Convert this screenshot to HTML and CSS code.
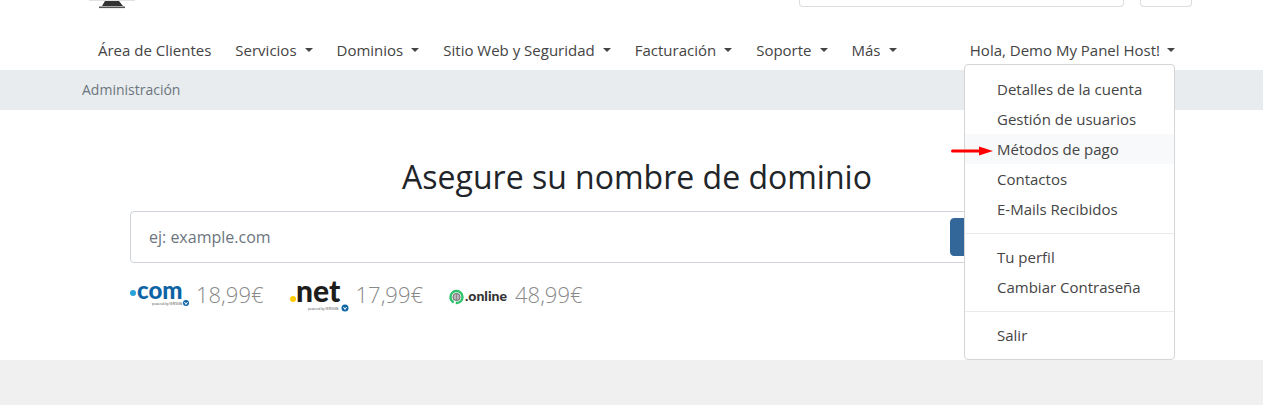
FILE: index.html
```html
<!DOCTYPE html>
<html lang="es">
<head>
    <meta charset="utf-8">
    <title>Área de Clientes</title>
    <link rel="stylesheet" href="styles.css">
</head>
<body>
    <header class="header">
        <div class="topbar container">
            <a href="#" class="logo" aria-label="Inicio">
                <svg width="48" height="9" viewBox="0 0 48 9">
                    <rect x="1" y="0" width="46" height="1" fill="#e2e2e2"/>
                    <path d="M17 1h14l4 5H14z" fill="#333"/>
                    <rect x="11" y="6.5" width="26" height="1.6" fill="#555"/>
                </svg>
            </a>
            <input type="search" class="search" aria-label="Buscar">
            <button type="button" class="cart" aria-label="Carrito"></button>
        </div>

        <nav class="navbar container">
            <ul class="nav">
                <li><a href="#">Área de Clientes</a></li>
                <li><a href="#" class="toggle">Servicios</a></li>
                <li><a href="#" class="toggle">Dominios</a></li>
                <li><a href="#" class="toggle">Sitio Web y Seguridad</a></li>
                <li><a href="#" class="toggle">Facturación</a></li>
                <li><a href="#" class="toggle">Soporte</a></li>
                <li><a href="#" class="toggle">Más</a></li>
            </ul>

            <div class="account">
                <a href="#" class="toggle">Hola, Demo My Panel Host!</a>
                <ul class="menu">
                    <li><a href="#">Detalles de la cuenta</a></li>
                    <li><a href="#">Gestión de usuarios</a></li>
                    <li class="active">
                        <svg class="arrow" width="43" height="10" viewBox="0 0 43 10">
                            <path d="M1.5 5H30" stroke="#f00" stroke-width="3" stroke-linecap="round"/>
                            <path d="M28 0.5L42 5L28 9.5z" fill="#f00"/>
                        </svg>
                        <a href="#">Métodos de pago</a>
                    </li>
                    <li><a href="#">Contactos</a></li>
                    <li><a href="#">E-Mails Recibidos</a></li>
                    <li class="divider"></li>
                    <li><a href="#">Tu perfil</a></li>
                    <li><a href="#">Cambiar Contraseña</a></li>
                    <li class="divider"></li>
                    <li><a href="#">Salir</a></li>
                </ul>
            </div>
        </nav>
    </header>

    <div class="breadcrumb">
        <div class="container">Administración</div>
    </div>

    <!-- Buscador de dominios -->
    <section class="domain">
        <div class="container">
            <div class="domain-inner">
                <h2>Asegure su nombre de dominio</h2>
                <form class="domain-form">
                    <input type="text" placeholder="ej: example.com" aria-label="Dominio">
                    <button type="submit">Buscar</button>
                </form>
                <ul class="tlds">
                    <li>
                        <svg width="60" height="44" viewBox="0 0 60 44">
                            <circle cx="3" cy="21" r="3" fill="#2aa3dc"/>
                            <text x="7" y="27" class="tld-com">com</text>
                            <text x="22" y="33" class="tld-note">powered by VERISIGN</text>
                            <circle cx="56" cy="31" r="3" fill="#0d64a5"/>
                            <path d="M54.5 30l1.5 2.500l1.5-2.500" stroke="#fff" fill="none"/>
                        </svg>
                        18,99€
                    </li>
                    <li>
                        <svg width="60" height="44" viewBox="0 0 60 44">
                            <circle cx="3" cy="27" r="3" fill="#fc0"/>
                            <text x="6" y="30" class="tld-net">net</text>
                            <text x="18" y="38" class="tld-note">powered by VERISIGN</text>
                            <circle cx="55" cy="36" r="3.5" fill="#0d64a5"/>
                            <path d="M53.5 35l1.5 2.500l1.5-2.500" stroke="#fff" fill="none"/>
                        </svg>
                        17,99€
                    </li>
                    <li>
                        <svg width="60" height="44" viewBox="0 0 60 44">
                            <circle cx="7.5" cy="25" r="6" fill="none" stroke="#2cc36b" stroke-width="2.4" stroke-dasharray="10 2 25.700"/>
                            <circle cx="7.5" cy="25" r="3.6" fill="#ddd" stroke="#666"/>
                            <path d="M4 25h7M7.5 21.500v7M5 23h5M5 27h5" stroke="#777" stroke-width="0.7"/>
                            <text x="16" y="29" class="tld-online">.online</text>
                        </svg>
                        48,99€
                    </li>
                </ul>
            </div>
        </div>
    </section>
</body>
</html>
```

FILE: styles.css
```css
* {
    box-sizing: border-box;
}
body {
    margin: 0;
    background: #f0f0f0;
    color: #212529;
    font-family: "Open Sans", "Noto Sans", sans-serif;
    font-size: 15px;
    line-height: 22px;
}
ul {
    list-style: none;
    margin: 0;
    padding: 0;
}
a {
    color: #444;
    text-decoration: none;
}
.container {
    padding: 0 71px 0 82px;
}
.header {
    background: #fff;
}

/* barra superior */
.topbar {
    display: flex;
    align-items: flex-start;
    gap: 16px;
    height: 30px;
}
.logo {
    display: flex;
    margin-right: auto;
    padding-left: 6px;
}
.search,
.cart {
    height: 7px;
    margin: 0;
    padding: 0;
    background: #fff;
    border: 1px solid #ddd;
    border-top: 0;
    border-radius: 0 0 4px 4px;
}
.search {
    width: 325px;
}
.cart {
    width: 52px;
}

/* menu principal */
.navbar {
    display: flex;
    justify-content: space-between;
    height: 40px;
    padding-top: 9px;
}
.nav {
    display: flex;
    gap: 24px;
    padding-left: 16px;
}
.toggle::after {
    content: "";
    display: inline-block;
    margin-left: 7px;
    vertical-align: 4px;
    border: 4px solid transparent;
    border-top-color: #444;
    border-bottom: 0;
}
.nav .toggle::after {
    margin-left: 8px;
}
.account {
    position: relative;
    margin-right: 17px;
}
.menu {
    position: absolute;
    z-index: 10;
    top: 25px;
    right: 0;
    width: 211px;
    padding: 9px 0;
    background: #fff;
    border: 1px solid #d4d5d6;
    border-radius: 4px;
}
.menu a {
    display: block;
    padding: 4px 0 4px 32px;
    white-space: nowrap;
}
.menu .active {
    position: relative;
    background: #f8f9fa;
}
.menu .divider {
    height: 1px;
    margin: 9px 0 8px;
    background: #e9ecef;
}
.arrow {
    position: absolute;
    top: 12px;
    left: -14px;
}

.breadcrumb {
    padding: 9px 0;
    background: #e8ecef;
    color: #6c757d;
    font-size: 14px;
}

/* dominios */
.domain {
    padding: 47px 0 44px;
    background: #fff;
}
.domain-inner {
    padding: 0 48px;
}
h2 {
    margin: 0 0 14px;
    font-size: 32px;
    font-weight: 400;
    line-height: 40px;
    text-align: center;
}
.domain-form {
    display: flex;
    align-items: center;
    height: 52px;
    border: 1px solid #ced4da;
    border-radius: 4px;
}
.domain-form input {
    flex: 1;
    min-width: 0;
    padding: 0 18px;
    border: 0;
    background: none;
    font: inherit;
    font-size: 16px;
}
.domain-form input::placeholder {
    color: #6c757d;
}
.domain-form button {
    width: 186px;
    height: 38px;
    margin-right: 7px;
    padding: 0 12px;
    background: #369;
    border: 1px solid #369;
    border-radius: 4px;
    color: #fff;
    font: inherit;
    font-size: 16px;
    text-align: left;
}
.tlds {
    display: flex;
    gap: 26px;
    padding: 9px 0 0;
}
.tlds li {
    display: flex;
    align-items: center;
    gap: 6px;
    color: #888;
    font-size: 22px;
    font-weight: 300;
    line-height: 44px;
}
.tld-com,
.tld-net,
.tld-online {
    font-family: Lato, sans-serif;
    font-weight: 900;
}
.tld-com {
    font-size: 24px;
    fill: #0d64a5;
}
.tld-net {
    font-size: 30px;
    fill: #1d1d1b;
}
.tld-online {
    font-size: 14px;
    fill: #333;
}
.tld-note {
    font-size: 3px;
    font-weight: 400;
    fill: #444;
}
```
